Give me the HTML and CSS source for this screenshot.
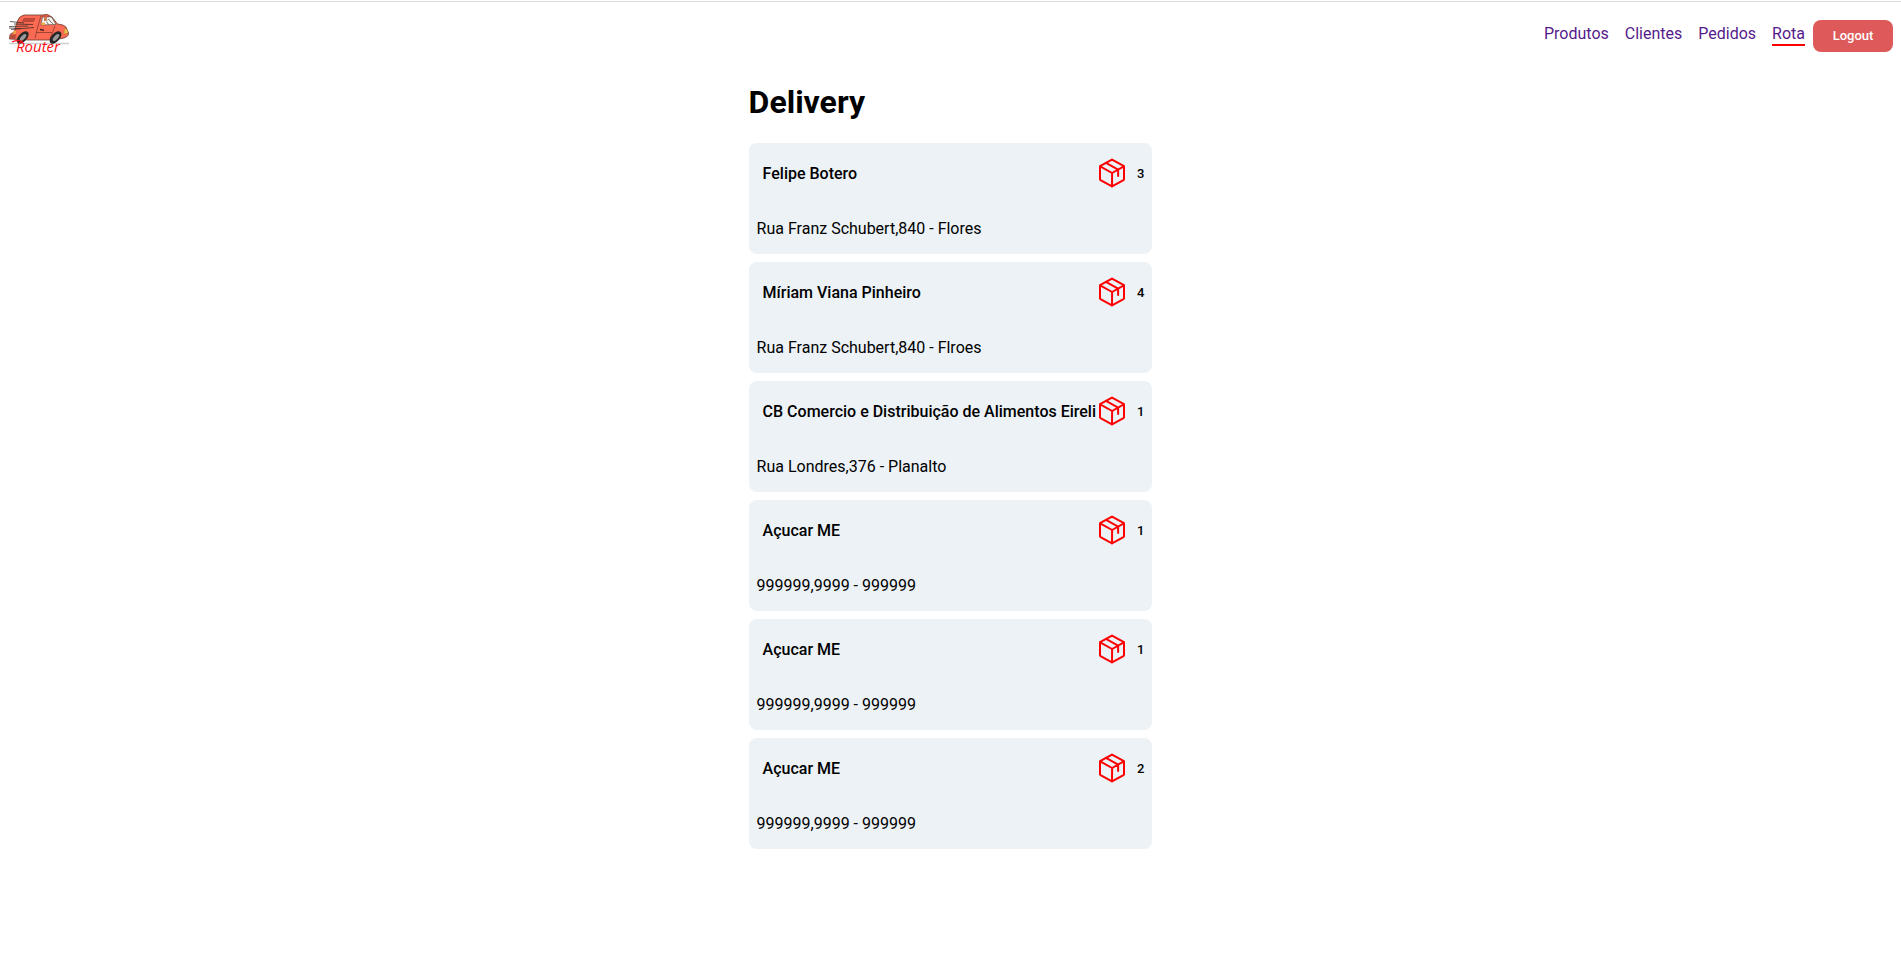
FILE: index.html
```html
<!DOCTYPE html>
<html lang="pt-BR">
<head>
<meta charset="utf-8">
<title>Router</title>
<link rel="stylesheet" href="styles.css">
</head>
<body>
<svg class="defs" aria-hidden="true">
  <symbol id="package" viewBox="0 0 256 256">
    <path d="M224 177.3V78.7a8.1 8.1 0 0 0-4.1-7l-88-49.5a7.8 7.8 0 0 0-7.8 0l-88 49.5a8.1 8.1 0 0 0-4.1 7v98.6a8.1 8.1 0 0 0 4.1 7l88 49.5a7.8 7.8 0 0 0 7.8 0l88-49.5a8.1 8.1 0 0 0 4.1-7Z"/>
    <path d="M177 152.5v-52L80 47M222.9 74.6 128.9 128 33.1 74.6M128.9 128l-.9 106.8"/>
  </symbol>
</svg>
<header class="header">
  <a class="logo" href="#" aria-label="Router">
    <svg viewBox="0 0 64 46" width="64" height="46">
      <path d="M1 31.5h60" stroke="#cfcfcf" stroke-width="1.6"/>
      <path d="M9.5 9Q11 4 16 3L35 3Q38 1.500 44 5L49.500 12Q56 12.500 58 15L60.500 21Q61 25 54 26.500L40 28H20L1.500 27L2 22.500L6 20Z" fill="#fb6a52" stroke="#6b3a30" stroke-width=".8"/>
      <path d="M33 3.500 30 14 27 26M47 14 42 27M28 20.500 44 20.500" fill="none" stroke="#7a3329" stroke-width=".7"/>
      <path d="M16 6.500H27L25.500 9.500H14.500Z" fill="#c4493b" stroke="#8b372c" stroke-width=".5"/>
      <path d="M32 17.500 36 18.200" stroke="#3b1f1b" stroke-width="1.4"/>
      <path d="M34.500 4.500 43.500 5 48 12.500 33 13Z" fill="#f6f6f2" stroke="#5c5048" stroke-width=".7"/>
      <path d="M34 5Q38 0 42 4L38 5.500Z" fill="#d95a43" stroke="#874033" stroke-width=".4"/>
      <path d="M36 5.500 39 6 38.500 9 36 9Z" fill="#c77b48"/>
      <path d="M33.500 10.500 37 10.500 37 13 33.500 13Z" fill="#f2b04a"/>
      <path d="M39.500 8Q41 6 42 9L45 12M38.500 9.500 40.500 12.500" fill="none" stroke="#5c5048" stroke-width=".8"/>
      <path d="M2 9.500 16 11M6 12 25 12.500M1 14.500 20 14M3 17.500 26 15.500M1 16 13 16.500" fill="none" stroke="#2c2020" stroke-width=".7"/>
      <path d="M2.500 22.500 8.500 22.500 7 27 1.500 27Z" fill="#b84c3c"/>
      <path d="M6 18.500 8 19 7 22 5 22Z" fill="#f3b43f"/>
      <path d="M56.500 16.500Q60 17 60 21L56 22Z" fill="#f4c44e" stroke="#986d2b" stroke-width=".4"/>
      <ellipse cx="14.700" cy="25.500" rx="4.200" ry="7.500" transform="rotate(43 14.700 25.500)" fill="#262626"/>
      <ellipse cx="15" cy="25.500" rx="2" ry="4.300" transform="rotate(43 15 25.500)" fill="#999"/>
      <ellipse cx="47.500" cy="25.500" rx="4.200" ry="7.500" transform="rotate(43 47.500 25.500)" fill="#262626"/>
      <ellipse cx="48" cy="25.500" rx="2" ry="4.300" transform="rotate(43 48 25.500)" fill="#999"/>
      <path d="M4 30Q9 27.500 15 29.500" fill="none" stroke="#fb0d16" stroke-width="1.200"/>
      <text class="logo-text" x="8" y="40">Router</text>
    </svg>
  </a>
  <nav class="nav">
    <a class="nav-link" href="#">Produtos</a>
    <a class="nav-link" href="#">Clientes</a>
    <a class="nav-link" href="#">Pedidos</a>
    <a class="nav-link nav-link-active" href="#" aria-current="page">Rota</a>
  </nav>
  <button class="logout" type="button">Logout</button>
</header>
<main class="delivery">
  <h1 class="title">Delivery</h1>
  <ul class="list">
    <li class="card">
      <div class="card-head"><strong class="name">Felipe Botero</strong><svg class="icon"><use href="#package"/></svg><span class="count">3</span></div>
      <p class="address">Rua Franz Schubert,840 - Flores</p>
    </li>
    <li class="card">
      <div class="card-head"><strong class="name">Míriam Viana Pinheiro</strong><svg class="icon"><use href="#package"/></svg><span class="count">4</span></div>
      <p class="address">Rua Franz Schubert,840 - Flroes</p>
    </li>
    <li class="card">
      <div class="card-head"><strong class="name">CB Comercio e Distribuição de Alimentos Eireli</strong><svg class="icon"><use href="#package"/></svg><span class="count">1</span></div>
      <p class="address">Rua Londres,376 - Planalto</p>
    </li>
    <li class="card">
      <div class="card-head"><strong class="name">Açucar ME</strong><svg class="icon"><use href="#package"/></svg><span class="count">1</span></div>
      <p class="address">999999,9999 - 999999</p>
    </li>
    <li class="card">
      <div class="card-head"><strong class="name">Açucar ME</strong><svg class="icon"><use href="#package"/></svg><span class="count">1</span></div>
      <p class="address">999999,9999 - 999999</p>
    </li>
    <li class="card">
      <div class="card-head"><strong class="name">Açucar ME</strong><svg class="icon"><use href="#package"/></svg><span class="count">2</span></div>
      <p class="address">999999,9999 - 999999</p>
    </li>
  </ul>
</main>
</body>
</html>
```
FILE: styles.css
```css
* { box-sizing: border-box; }
body {
  margin: 0;
  padding-top: 1px;
  background: #fff;
  color: #000;
  font-family: Roboto, sans-serif;
  font-size: 16px;
  font-weight: 400;
}
.defs { display: none; }
.header {
  display: flex;
  align-items: center;
  gap: 8px;
  padding: 10px 8px 8px;
  border-top: 1px solid #d9dcdc;
}
.logo { margin-right: auto; }
.logo svg { display: block; }
.logo-text {
  fill: #fb0d16;
  font-family: "Open Sans", sans-serif;
  font-size: 15px;
  font-style: italic;
  font-weight: 400;
}
.nav { display: flex; gap: 16px; }
.nav-link {
  color: #551a8b;
  line-height: 20px;
  text-decoration: none;
  border-bottom: 2px solid transparent;
}
.nav-link-active { border-bottom-color: #f00; }
.logout {
  width: 80px;
  height: 32px;
  margin-top: 2px;
  padding: 0;
  border: 0;
  border-radius: 8px;
  background: #de5959;
  color: #fff;
  font: 500 13px/16px Roboto, sans-serif;
}
.delivery {
  width: fit-content;
  margin: 0 auto;
  padding-top: 16px;
}
.title {
  margin: 0 0 21px;
  font-size: 32px;
  font-weight: 700;
  line-height: 40px;
}
.list {
  display: flex;
  flex-direction: column;
  gap: 8px;
  margin: 0;
  padding: 0;
  list-style: none;
}
.card {
  padding: 8px 8px 15px;
  border-radius: 8px;
  background: #ecf2f6;
}
.card-head {
  display: flex;
  align-items: center;
  height: 44px;
  padding-left: 6px;
}
.name {
  flex: 1;
  font-weight: 500;
  white-space: nowrap;
}
.icon {
  width: 32px;
  height: 32px;
  margin-right: 9px;
  fill: none;
  stroke: #f00;
  stroke-width: 16px;
  stroke-linecap: round;
  stroke-linejoin: round;
}
.count { font-size: 13px; font-weight: 500; }
.address { margin: 24px 0 0; line-height: 20px; }
```
